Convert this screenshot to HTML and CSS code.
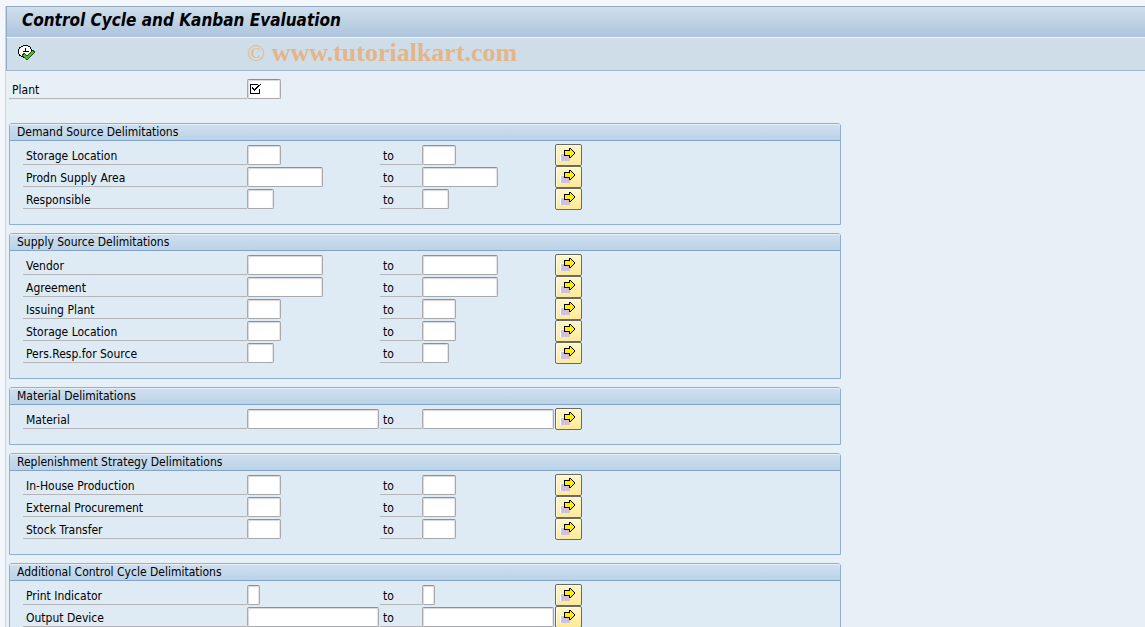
FILE: index.html
```
<!DOCTYPE html>
<html lang="en">
<head>
    <meta charset="UTF-8">
    <title>Control Cycle and Kanban Evaluation</title>
    <link rel="stylesheet" href="styles.css">
</head>
<body>
<!-- Shared icons -->
<svg class="sprite" aria-hidden="true">
    <symbol id="icon-arrow" viewBox="0 0 16 16">
        <path fill="#fff" d="M0 6h10v1H1v7H0z"/>
        <path fill="#d2bede" d="M1 7h9v7H1z"/>
        <path fill="#000" d="M9 1h2v1h1v1h1v1h1v1h1v2h-1v1h-1v1h-1v1h-1v1H9V9H4V3h5z"/>
        <path fill="#ffec00" d="M10 2h1v1h1v1h1v1h1v2h-1v1h-1v1h-1v1h-1V8H5V4h5z"/>
    </symbol>
    <symbol id="icon-execute" viewBox="0 0 17 16">
        <path fill="#000" d="M5 0h5v1h2v1h1v2h1v5h-1v2h-1v1h-2v1H5v-1H3v-1H1V9H0V4h1V2h2V1h2z"/>
        <path fill="#fff" d="M5 1h5v1h2v2h1v5h-1v2h-2v1H5v-1H3v-1H2V9H1V4h1V3h1V2h2z"/>
        <path fill="#000" d="M7 3h1v3h3v1H5V6h2z"/>
        <path fill="none" stroke="#1d4a10" stroke-width="4" d="M5 9l4 4 7-7"/>
        <path fill="none" stroke="#58b830" stroke-width="2" d="M6 10l3 3 6-6"/>
    </symbol>
    <symbol id="icon-required" viewBox="0 0 12 11">
        <path fill="#000" d="M0 0h8v1H1v8h8V5h1v5H0z"/>
        <path fill="#000" d="M10 0h1v1h-1v1H9v1H8v1H7v1H6v1H5v1H4V6H3V5H2V3h1v1h1v1h1V4h1V3h1V2h1V1h2z"/>
    </symbol>
</svg>

<main class="window">
    <header class="title-bar">
        <h1>Control Cycle and Kanban Evaluation</h1>
    </header>
    <div class="toolbar">
        <button class="execute" type="button" aria-label="Execute">
            <svg class="execute-icon"><use href="#icon-execute"/></svg>
        </button>
        <span class="watermark"><span class="copy">©</span> www.tutorialkart.com</span>
    </div>

    <form class="screen">
        <div class="row plant">
            <label for="plant">Plant</label>
            <span class="required">
                <input class="w4" id="plant" type="text">
                <svg class="required-icon"><use href="#icon-required"/></svg>
            </span>
        </div>

        <!-- Demand source -->
        <section class="group">
            <h2>Demand Source Delimitations</h2>
            <div class="rows">
                <div class="row">
                    <label for="dsloc">Storage Location</label>
                    <input class="w4" id="dsloc" type="text">
                    <label for="dsloc-to">to</label>
                    <input class="w4" id="dsloc-to" type="text">
                    <button class="more" type="button" aria-label="Multiple selection"><svg><use href="#icon-arrow"/></svg></button>
                </div>
                <div class="row">
                    <label for="area">Prodn Supply Area</label>
                    <input class="w10" id="area" type="text">
                    <label for="area-to">to</label>
                    <input class="w10" id="area-to" type="text">
                    <button class="more" type="button" aria-label="Multiple selection"><svg><use href="#icon-arrow"/></svg></button>
                </div>
                <div class="row">
                    <label for="resp">Responsible</label>
                    <input class="w3" id="resp" type="text">
                    <label for="resp-to">to</label>
                    <input class="w3" id="resp-to" type="text">
                    <button class="more" type="button" aria-label="Multiple selection"><svg><use href="#icon-arrow"/></svg></button>
                </div>
            </div>
        </section>

        <!-- Supply source -->
        <section class="group">
            <h2>Supply Source Delimitations</h2>
            <div class="rows">
                <div class="row">
                    <label for="vendor">Vendor</label>
                    <input class="w10" id="vendor" type="text">
                    <label for="vendor-to">to</label>
                    <input class="w10" id="vendor-to" type="text">
                    <button class="more" type="button" aria-label="Multiple selection"><svg><use href="#icon-arrow"/></svg></button>
                </div>
                <div class="row">
                    <label for="agreement">Agreement</label>
                    <input class="w10" id="agreement" type="text">
                    <label for="agreement-to">to</label>
                    <input class="w10" id="agreement-to" type="text">
                    <button class="more" type="button" aria-label="Multiple selection"><svg><use href="#icon-arrow"/></svg></button>
                </div>
                <div class="row">
                    <label for="issuing">Issuing Plant</label>
                    <input class="w4" id="issuing" type="text">
                    <label for="issuing-to">to</label>
                    <input class="w4" id="issuing-to" type="text">
                    <button class="more" type="button" aria-label="Multiple selection"><svg><use href="#icon-arrow"/></svg></button>
                </div>
                <div class="row">
                    <label for="ssloc">Storage Location</label>
                    <input class="w4" id="ssloc" type="text">
                    <label for="ssloc-to">to</label>
                    <input class="w4" id="ssloc-to" type="text">
                    <button class="more" type="button" aria-label="Multiple selection"><svg><use href="#icon-arrow"/></svg></button>
                </div>
                <div class="row">
                    <label for="person">Pers.Resp.for Source</label>
                    <input class="w3" id="person" type="text">
                    <label for="person-to">to</label>
                    <input class="w3" id="person-to" type="text">
                    <button class="more" type="button" aria-label="Multiple selection"><svg><use href="#icon-arrow"/></svg></button>
                </div>
            </div>
        </section>

        <!-- Material -->
        <section class="group">
            <h2>Material Delimitations</h2>
            <div class="rows">
                <div class="row">
                    <label for="material">Material</label>
                    <input class="w18" id="material" type="text">
                    <label for="material-to">to</label>
                    <input class="w18" id="material-to" type="text">
                    <button class="more" type="button" aria-label="Multiple selection"><svg><use href="#icon-arrow"/></svg></button>
                </div>
            </div>
        </section>

        <!-- Replenishment strategy -->
        <section class="group">
            <h2>Replenishment Strategy Delimitations</h2>
            <div class="rows">
                <div class="row">
                    <label for="inhouse">In-House Production</label>
                    <input class="w4" id="inhouse" type="text">
                    <label for="inhouse-to">to</label>
                    <input class="w4" id="inhouse-to" type="text">
                    <button class="more" type="button" aria-label="Multiple selection"><svg><use href="#icon-arrow"/></svg></button>
                </div>
                <div class="row">
                    <label for="external">External Procurement</label>
                    <input class="w4" id="external" type="text">
                    <label for="external-to">to</label>
                    <input class="w4" id="external-to" type="text">
                    <button class="more" type="button" aria-label="Multiple selection"><svg><use href="#icon-arrow"/></svg></button>
                </div>
                <div class="row">
                    <label for="transfer">Stock Transfer</label>
                    <input class="w4" id="transfer" type="text">
                    <label for="transfer-to">to</label>
                    <input class="w4" id="transfer-to" type="text">
                    <button class="more" type="button" aria-label="Multiple selection"><svg><use href="#icon-arrow"/></svg></button>
                </div>
            </div>
        </section>

        <!-- Additional control cycle -->
        <section class="group">
            <h2>Additional Control Cycle Delimitations</h2>
            <div class="rows">
                <div class="row">
                    <label for="print">Print Indicator</label>
                    <input class="w1" id="print" type="text">
                    <label for="print-to">to</label>
                    <input class="w1" id="print-to" type="text">
                    <button class="more" type="button" aria-label="Multiple selection"><svg><use href="#icon-arrow"/></svg></button>
                </div>
                <div class="row">
                    <label for="device">Output Device</label>
                    <input class="w18" id="device" type="text">
                    <label for="device-to">to</label>
                    <input class="w18" id="device-to" type="text">
                    <button class="more" type="button" aria-label="Multiple selection"><svg><use href="#icon-arrow"/></svg></button>
                </div>
            </div>
        </section>
    </form>
</main>
</body>
</html>
```
FILE: styles.css
```
* {
    box-sizing: border-box;
}
body {
    margin: 0;
    height: 100vh;
    overflow: hidden;
    padding: 6px 0 0 5px;
    background: #f3f7fb;
    font-family: Tahoma, "DejaVu Sans Condensed", "DejaVu Sans", sans-serif;
    font-size: 12px;
    color: #000;
}
svg {
    display: block;
    shape-rendering: crispEdges;
}
.sprite {
    display: none;
}
.window {
    min-height: 100%;
    border-left: 1px solid #c9d5e2;
    background: #e8f0f7;
}

/* Title and toolbar */
.title-bar {
    height: 31px;
    padding-left: 15px;
    border-top: 1px solid #92aac4;
    border-left: 1px solid #92aac4;
    background: linear-gradient(#d0dfea, #acc4dd);
}
.title-bar h1 {
    margin: 0;
    font-size: 17px;
    font-style: italic;
    line-height: 26px;
}
.toolbar {
    display: flex;
    align-items: center;
    height: 34px;
    padding: 0 0 3px 11px;
    border-top: 1px solid #eff5fa;
    border-bottom: 1px solid #a0b4ca;
    border-left: 1px solid #92aac4;
    background: #cfdde8;
}
.execute {
    width: 229px;
    padding: 0;
    border: 0;
    background: none;
}
.execute-icon {
    width: 17px;
    height: 16px;
}
.watermark {
    font-family: "Liberation Serif", serif;
    font-size: 26px;
    font-weight: bold;
    line-height: 28px;
    color: #e3b68a;
}
.copy {
    font-size: 24px;
    font-weight: normal;
}

/* Selection screen */
.screen {
    max-width: 838px;
    padding: 7px 3px 0;
}
.row {
    display: grid;
    grid-template-columns: 224px 133px 42px 133px 27px;
    align-items: start;
    height: 22px;
}
.row label {
    height: 21px;
    padding-left: 3px;
    border-bottom: 1px solid #b3b5b8;
    line-height: 24px;
}
.plant {
    grid-template-columns: 238px 133px;
    margin-bottom: 23px;
}
.required {
    position: relative;
}
.required-icon {
    position: absolute;
    top: 6px;
    left: 3px;
    width: 12px;
    height: 11px;
}
.row input {
    display: block;
    height: 20px;
    margin: 1px 0 0;
    padding: 0 2px;
    border: 1px solid #a7a9ac;
    border-top-color: #8e9194;
    border-radius: 2px;
    background: #fff;
    box-shadow: inset 1px 1px 1px #d8d8dc, inset -1px 0 1px #e4e4e8;
    font: inherit;
}
.w1 { width: 13px; }
.w3 { width: 27px; }
.w4 { width: 34px; }
.w10 { width: 76px; }
.w18 { width: 132px; }
.more {
    width: 27px;
    height: 22px;
    padding: 0 0 0 4px;
    border: 1px solid #6a6a64;
    border-radius: 2px;
    background: linear-gradient(#fff6cc, #fdea97);
    box-shadow: inset 1px 1px 0 #fffbe6;
}
.more svg {
    width: 16px;
    height: 16px;
}

/* Group boxes */
.group {
    margin-bottom: 8px;
    border: 1px solid #8fb0d0;
    border-radius: 3px 3px 0 0;
    background: #deeaf4;
}
.group h2 {
    height: 17px;
    margin: 0;
    padding-left: 7px;
    border-bottom: 1px solid #83a3c5;
    border-radius: 2px 2px 0 0;
    background: linear-gradient(#cfdfee, #bbd3e8);
    box-shadow: inset 0 1px 0 #e6eff7;
    font-size: 12px;
    font-weight: normal;
    line-height: 16px;
}
.rows {
    padding: 3px 0 14px 13px;
}
```
